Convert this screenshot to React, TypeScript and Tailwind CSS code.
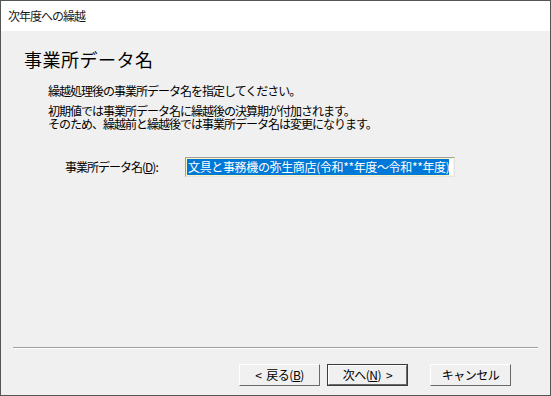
import React from 'react';

const jp = { fontFamily: '"Noto Sans CJK JP", "Noto Sans", sans-serif' };

function Btn({ children, primary }: { children: React.ReactNode; primary?: boolean }) {
  return (
    <div className={primary ? 'w-[81px] h-[22px] border border-[#3c3c3c]' : 'w-[81px] h-[22px]'}>
      <div className="h-full w-full bg-[#f0f0f0] border border-t-white border-l-white border-r-[#696969] border-b-[#696969] flex items-center justify-center text-[12px] leading-[12px] tracking-[-0.5px] text-black whitespace-nowrap">
        {children}
      </div>
    </div>
  );
}

export default function App() {
  return (
    <div style={jp} className="w-[551px] h-[396px] border border-[#555555] flex flex-col bg-[#f0f0f0] text-black select-none">
      <header className="h-[30px] bg-white flex items-center pl-[7px]">
        <span className="text-[12px] leading-[12px] tracking-[-1px] text-[#1a1a1a]">次年度への繰越</span>
      </header>

      <main className="flex-1 flex flex-col">
        <h1 className="pl-[23px] pt-[19px] text-[18px] leading-[18px] tracking-[0.5px]">事業所データ名</h1>

        <div className="pl-[47px] pt-[16px] text-[12px] leading-[13px] tracking-[-1px]">
          <p>繰越処理後の事業所データ名を指定してください。</p>
          <p className="mt-[7px]">
            初期値では事業所データ名に繰越後の決算期が付加されます。
            <br />
            そのため、繰越前と繰越後では事業所データ名は変更になります。
          </p>
        </div>

        <div className="mt-[27px] flex items-center pl-[64px]">
          <label className="w-[120px] text-[12px] leading-[12px] tracking-[-1px]">
            事業所データ名(<span className="underline">D</span>):
          </label>
          <div className="w-[270px] h-[20px] border border-t-[#a0a0a0] border-l-[#a0a0a0] border-r-[#e3e3e3] border-b-[#e3e3e3] bg-white">
            <div className="h-full border border-[#fdf6c3] overflow-hidden whitespace-nowrap flex items-center">
              <span className="bg-[#0078d7] text-white text-[12px] leading-[16px] tracking-[-0.35px] pl-[1px]">
                文具と事務機の弥生商店(令和**年度～令和**年度)
              </span>
            </div>
          </div>
        </div>

        <div className="mt-auto mx-[12px] border-t border-t-[#a0a0a0] border-b border-b-white" />

        <div className="flex justify-end pr-[39px] pt-[15px] pb-[9px]">
          <Btn>
            <span className="mr-[5px]">&lt;</span>戻る(<span className="underline">B</span>)
          </Btn>
          <div className="ml-[7px]">
            <Btn primary>
              次へ(<span className="underline">N</span>)<span className="ml-[5px]">&gt;</span>
            </Btn>
          </div>
          <div className="ml-[22px]">
            <Btn>キャンセル</Btn>
          </div>
        </div>
      </main>
    </div>
  );
}
